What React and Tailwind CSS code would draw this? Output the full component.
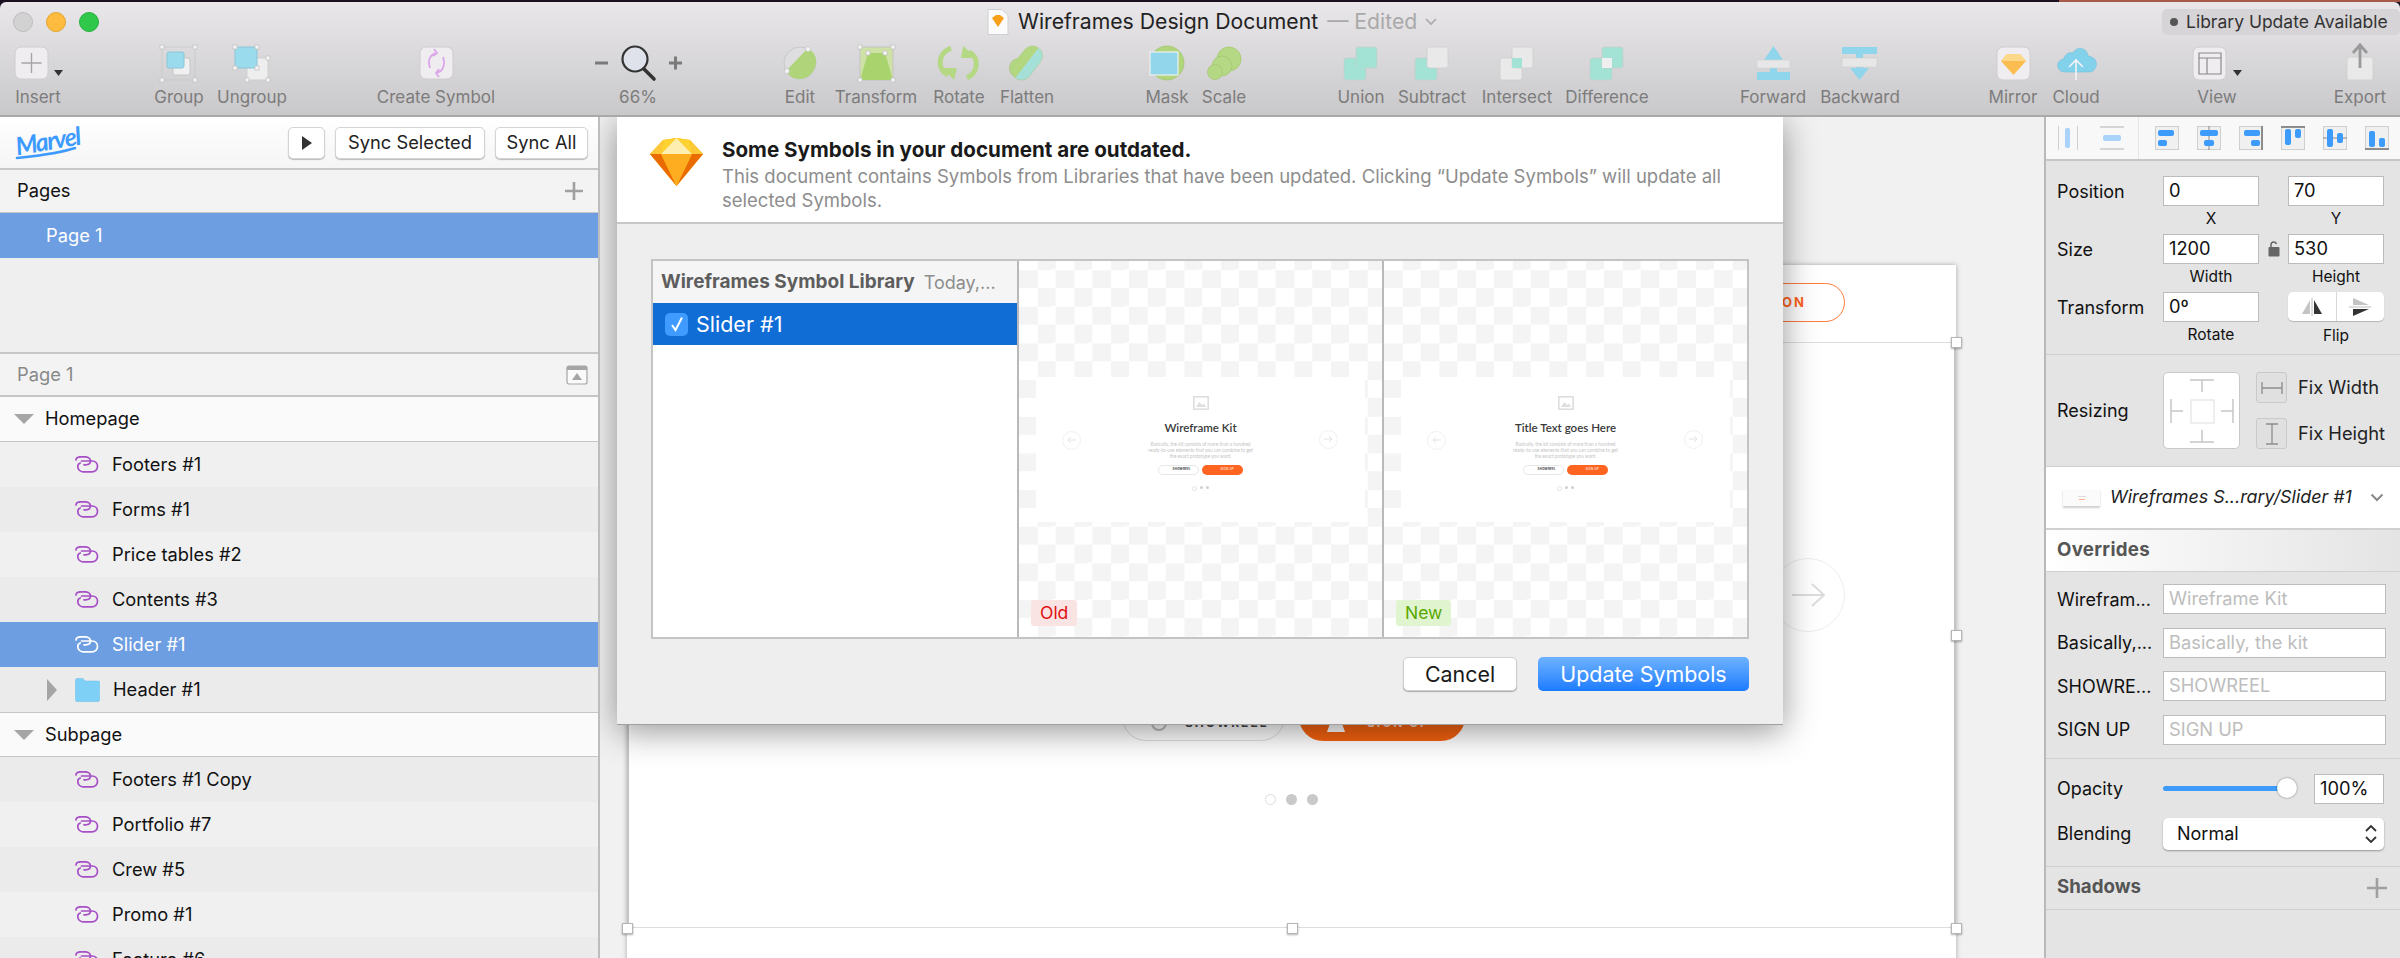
import React from "react";

const H = ({ x, y }) => <rect x={x - 2} y={y - 2} width="4" height="4" fill="#f5f5f5" stroke="#c4c4c4" strokeWidth="0.8" />;

const Diamond = ({ className }) => (
  <svg viewBox="0 0 53 48" className={className}>
    <polygon points="13,2 26.5,0 40,2 53,16 26.5,48 0,16" fill="#fdb300" />
    <polygon points="0,16 11,16 26.5,48" fill="#ea6c00" />
    <polygon points="53,16 42,16 26.5,48" fill="#ea6c00" />
    <polygon points="11,16 42,16 26.5,48" fill="#fdad1f" />
    <polygon points="13,2 11,16 26.5,0" fill="#fdd231" />
    <polygon points="40,2 42,16 26.5,0" fill="#fdd231" />
    <polygon points="26.5,0 11,16 42,16" fill="#feeeb0" />
    <polygon points="13,2 0,16 11,16" fill="#fdc83a" />
    <polygon points="40,2 53,16 42,16" fill="#fdc83a" />
  </svg>
);

const Box = ({ x = -16, w = 33 }) => <rect x={x} y="3" width={w} height="32" rx="6" fill="#efedef" stroke="#cfcdcf" />;

const TEAL = "#a3e3d5";
const A = (f) => <rect x="-17" y="14" width="22" height="22" rx="2.5" fill={f} stroke="#c9c9c9" strokeWidth="0.6" />;
const B = (f) => <rect x="-5" y="3" width="21" height="21" rx="2.5" fill={f} stroke="#c9c9c9" strokeWidth="0.6" />;
const O = (f) => <rect x="-5" y="14" width="10" height="10" fill={f} />;

const icons = {
  insert: (
    <>
      <rect x="-23" y="3" width="33" height="32" rx="6" fill="#efedef" stroke="#cfcdcf" />
      <path d="M-6.5 9v20M-16.5 19h20" stroke="#a5a5a5" strokeWidth="1.4" />
      <polygon points="16,26 25,26 20.5,32" fill="#333" />
    </>
  ),
  group: (
    <>
      <rect x="-17" y="3" width="33" height="33" fill="none" stroke="#cbcbcb" />
      <H x={-17} y={3} /><H x={16} y={3} /><H x={-17} y={36} /><H x={16} y={36} />
      <rect x="-6" y="14" width="17" height="17" rx="2" fill="#f0f0f0" stroke="#c8c8c8" />
      <rect x="-12" y="8" width="17" height="16" rx="2" fill="#9adcee" stroke="#8cc6d6" />
    </>
  ),
  ungroup: (
    <>
      <rect x="-5" y="14" width="21" height="22" fill="#eeeeee" stroke="#cfcfcf" />
      <H x={16} y={14} /><H x={16} y={36} /><H x={-5} y={36} />
      <rect x="-17" y="3" width="22" height="21" rx="1" fill="#9adcee" stroke="#8cc6d6" />
      <H x={-17} y={3} /><H x={5} y={3} /><H x={-17} y={24} /><H x={5} y={24} />
    </>
  ),
  symbol: (
    <>
      <Box />
      <path d="M-6 24 C-9 15 -5 10 1 9M-3 12 L1 9 L-2 5M7 13 C10 22 6 28 0 29M3 25 L0 29 L3 33" fill="none" stroke="#dca6ea" strokeWidth="1.8" />
    </>
  ),
  zoom: (
    <>
      <path d="M-43 19h13M31 19h13M37.5 12.5v13" stroke="#7a7a7a" strokeWidth="3" />
      <circle cx="-3" cy="15" r="12.5" fill="#dfe2ea" stroke="#333" strokeWidth="2.2" />
      <path d="M6 25 L16 35" stroke="#333" strokeWidth="3.6" strokeLinecap="round" />
    </>
  ),
  edit: (
    <>
      <circle cx="0" cy="19" r="16" fill="#dedddf" stroke="#c9c9c9" />
      <path d="M-14 27 L7 5 C14 6 17 14 16 20 C14 30 6 36 -1 35 C-7 35 -11 32 -14 27Z" fill="#afd47a" />
      <circle cx="-13" cy="27" r="2.5" fill="#f4f4f4" stroke="#bbb" strokeWidth="0.6" />
      <circle cx="8" cy="5" r="2.5" fill="#f4f4f4" stroke="#bbb" strokeWidth="0.6" />
    </>
  ),
  transform: (
    <>
      <rect x="-16" y="3" width="33" height="33" fill="#cfe2a6" stroke="#c4c4c4" />
      <polygon points="-8,9 9,9 17,36 -16,36" fill="#a8d36d" />
      <H x={-16} y={3} /><H x={17} y={3} /><H x={-16} y={36} /><H x={17} y={36} /><H x={-8} y={9} /><H x={9} y={9} />
    </>
  ),
  rotate: (
    <>
      <path d="M-8 4 C-22 10 -22 25 -11 31" fill="none" stroke="#b5d884" strokeWidth="5" />
      <polygon points="-17,24 -2,24 -5,36" fill="#b5d884" />
      <path d="M8 34 C20 28 20 13 10 8" fill="none" stroke="#b5d884" strokeWidth="5" />
      <polygon points="18,14 2,14 4,2" fill="#b5d884" />
    </>
  ),
  flatten: (
    <>
      <circle cx="-8" cy="24" r="9.5" fill="#b6d987" stroke="#9cc06a" strokeWidth="0.7" />
      <g transform="rotate(38 0 19)">
        <path d="M0 0 A10 10 0 0 0 -10 10 V28 A10 10 0 0 0 0 38Z" fill="#b2d77e" />
        <path d="M0 0 A10 10 0 0 1 10 10 V28 A10 10 0 0 1 0 38Z" fill="#a5e0d8" />
        <rect x="-10" y="0" width="20" height="38" rx="10" fill="none" stroke="#a8c98a" strokeWidth="0.5" />
      </g>
    </>
  ),
  mask: (
    <>
      <circle cx="0" cy="19" r="17" fill="#b0d57a" stroke="#9cc068" strokeWidth="0.6" />
      <rect x="-17" y="8" width="28" height="23" fill="#92d6ec" stroke="#f0f0f0" strokeWidth="1.2" />
    </>
  ),
  scale: (
    <>
      <circle cx="5" cy="15" r="12" fill="#b5d884" stroke="#9fc56c" strokeWidth="0.7" />
      <circle cx="-2" cy="22" r="10" fill="#b5d884" stroke="#9fc56c" strokeWidth="0.7" />
      <circle cx="-9" cy="28" r="7.5" fill="#b5d884" stroke="#9fc56c" strokeWidth="0.7" />
    </>
  ),
  union: (<>{A(TEAL)}{B(TEAL)}<rect x="-4" y="13" width="9" height="11" fill={TEAL} /></>),
  subtract: (<>{A(TEAL)}{B("#e9e9e9")}</>),
  intersect: (<>{A("#e9e9e9")}{B("#e9e9e9")}{O(TEAL)}</>),
  difference: (<>{A(TEAL)}{B(TEAL)}{O("#efefef")}</>),
  forward: (
    <>
      <polygon points="0.5,2 10,16 4,16 4,28 -3,28 -3,16 -9,16" fill="#8fd6ec" />
      <rect x="-16" y="16" width="33" height="8" fill="#e7e7e7" stroke="#cfcfcf" strokeWidth="0.6" />
      <rect x="-16" y="28" width="33" height="8" fill="#8fd6ec" />
    </>
  ),
  backward: (
    <>
      <rect x="-18" y="3" width="35" height="7" fill="#8fd6ec" />
      <polygon points="-0.5,36 9,24 3,24 3,10 -4,10 -4,24 -10,24" fill="#8fd6ec" />
      <rect x="-18" y="14" width="35" height="9" rx="1" fill="#e7e7e7" stroke="#cfcfcf" strokeWidth="0.6" />
    </>
  ),
  mirror: (
    <>
      <rect x="-16" y="3" width="33" height="33" rx="6" fill="#efedef" stroke="#cfcdcf" />
      <polygon points="-6,10 7,10 13,17 0.5,31 -12,17" fill="#fbbd50" />
      <polygon points="-6,10 7,10 13,17 -12,17" fill="#fcd98a" />
    </>
  ),
  cloud: (
    <>
      <path d="M-11 28 C-20 28 -21 16 -12 15 C-11 9 -6 8 -3 9 C0 2 11 3 12 12 C20 13 23 20 18 26 C16 28 14 28 12 28Z" fill="#82d2ec" stroke="#6fbfdb" strokeWidth="0.6" />
      <path d="M0 36V16M-7 23L0 16L7 23" fill="none" stroke="#f4f4f4" strokeWidth="1.6" />
    </>
  ),
  view: (
    <>
      <rect x="-24" y="3" width="33" height="33" rx="6" fill="#efedef" stroke="#cfcdcf" />
      <path d="M-18 9h22v21h-22zM-18 14h22M-10 14v16" fill="none" stroke="#8a8a8a" strokeWidth="1.2" />
      <polygon points="16,26 25,26 20.5,32" fill="#333" />
    </>
  ),
  export: (
    <>
      <rect x="-13" y="13" width="26" height="23" rx="2" fill="#e9e9e9" stroke="#d2d2d2" />
      <path d="M0 24V1M-7 9L0 1L7 9" fill="none" stroke="#9a9a9a" strokeWidth="2.8" />
    </>
  ),
};

const Tool = ({ icon, label, className }) => (
  <div className={`flex flex-col items-center shrink-0 ${className}`}>
    <svg width="100" height="40" viewBox="-50 0 100 40" className="shrink-0 overflow-visible">{icons[icon]}</svg>
    <span className="mt-[2px] h-[22px] leading-[22px] text-[17px] text-[#7c7c7c] whitespace-nowrap">{label}</span>
  </div>
);

const Toolbar = () => (
  <div className="shrink-0 bg-[#1b1020]">
    <div className="h-[2px] flex">
      <div className="flex-1 bg-[#1b1020]" />
      <div className="w-[341px] bg-[#a85a4a]" />
    </div>
    <div className="h-[115px] flex flex-col border-b-2 border-[#a9a9a9] rounded-t-[6px] bg-gradient-to-b from-[#e9e7ea] to-[#c9c8ca]">
      <div className="h-[40px] shrink-0 flex items-center relative">
        <div className="flex gap-[13px] ml-[13px]">
          <span className="w-[20px] h-[20px] rounded-full bg-[#d2d2d2] border border-[#bdbdbd]" />
          <span className="w-[20px] h-[20px] rounded-full bg-[#fdbc40] border border-[#e5a52f]" />
          <span className="w-[20px] h-[20px] rounded-full bg-[#2fc84a] border border-[#27b03f]" />
        </div>
        <div className="flex items-center ml-[888px]">
          <svg width="22" height="26" viewBox="0 0 22 26" className="mr-[9px]">
            <path d="M1 0.5h14l6 6v19H1z" fill="#fbfbfb" stroke="#cfcfcf" />
            <polygon points="5,9 9,6 13,6 17,9 11,18" fill="#f7a11a" />
          </svg>
          <span className="text-[21.2px] text-[#222] whitespace-nowrap">Wireframes Design Document</span>
          <span className="text-[21.2px] text-[#a9a9a9] ml-[9px] whitespace-nowrap">— Edited</span>
          <svg width="14" height="10" viewBox="0 0 14 10" className="ml-[7px]"><path d="M2 2l5 5 5-5" fill="none" stroke="#a9a9a9" strokeWidth="1.6" /></svg>
        </div>
        <div className="ml-auto h-[26px] w-[238px] rounded-[5px] bg-[#d6d4d7] flex items-center pl-[8px] gap-[8px]">
          <span className="w-[8px] h-[8px] rounded-full bg-[#555]" />
          <span className="text-[17.5px] text-[#333] whitespace-nowrap">Library Update Available</span>
        </div>
      </div>
      <div className="flex items-start mt-[2px]">
        <Tool icon="insert" label="Insert" className="w-[76px]" />
        <Tool icon="group" label="Group" className="w-[50px] ml-[78px]" />
        <Tool icon="ungroup" label="Ungroup" className="w-[70px] ml-[13px]" />
        <Tool icon="symbol" label="Create Symbol" className="w-[120px] ml-[89px]" />
        <Tool icon="zoom" label="66%" className="w-[100px] ml-[92px]" />
        <Tool icon="edit" label="Edit" className="w-[40px] ml-[92px]" />
        <Tool icon="transform" label="Transform" className="w-[80px] ml-[16px]" />
        <Tool icon="rotate" label="Rotate" className="w-[52px] ml-[17px]" />
        <Tool icon="flatten" label="Flatten" className="w-[56px] ml-[14px]" />
        <Tool icon="mask" label="Mask" className="w-[44px] ml-[90px]" />
        <Tool icon="scale" label="Scale" className="w-[44px] ml-[13px]" />
        <Tool icon="union" label="Union" className="w-[46px] ml-[92px]" />
        <Tool icon="subtract" label="Subtract" className="w-[70px] ml-[13px]" />
        <Tool icon="intersect" label="Intersect" className="w-[70px] ml-[15px]" />
        <Tool icon="difference" label="Difference" className="w-[84px] ml-[13px]" />
        <Tool icon="forward" label="Forward" className="w-[66px] ml-[91px]" />
        <Tool icon="backward" label="Backward" className="w-[80px] ml-[14px]" />
        <Tool icon="mirror" label="Mirror" className="w-[48px] ml-[89px]" />
        <Tool icon="cloud" label="Cloud" className="w-[46px] ml-[16px]" />
        <Tool icon="view" label="View" className="w-[40px] ml-[98px]" />
        <Tool icon="export" label="Export" className="w-[54px] ml-[96px]" />
      </div>
    </div>
  </div>
);

const SymbolIcon = ({ color = "#a64fc7" }) => (
  <svg width="24" height="17" viewBox="0 0 24 17" className="shrink-0">
    <path d="M1 4 C1 1.500 3 0.800 6 0.800 H10 C13.500 0.800 15.500 2.800 15.500 5 C15.500 7.500 13.500 8.800 10.500 8.800 H9" fill="none" stroke={color} strokeWidth="1.7" strokeLinecap="round" />
    <path d="M6.500 5 H17 C20.500 5 22.500 7.500 22.500 10.500 C22.500 13.500 20 15.800 17 15.800 H8 C5 15.800 2.800 13.500 2.800 10.500 C2.800 8.800 3.800 7.500 5.200 7" fill="none" stroke={color} strokeWidth="1.7" strokeLinecap="round" />
  </svg>
);

const Tri = () => <span className="w-0 h-0 border-x-[10px] border-x-transparent border-t-[10px] border-t-[#a5a5a5] shrink-0" />;

const GroupRow = ({ label, h }) => (
  <div className={`${h} shrink-0 bg-[#fafafa] border-b border-[#c6c6c6] flex items-center pl-[14px] gap-[11px] text-[18.3px] text-[#111]`}>
    <Tri />
    <span>{label}</span>
  </div>
);

const LayerRow = ({ label, bg, selected, folder }) => (
  <div className={`h-[45px] shrink-0 flex items-center relative pl-[75px] gap-[13px] text-[18.3px] ${selected ? "bg-[#6d9ee2] text-white" : `${bg} text-[#111]`}`}>
    {folder ? (
      <>
        <span className="absolute left-[47px] w-0 h-0 border-y-[11px] border-y-transparent border-l-[10px] border-l-[#a5a5a5]" />
        <svg width="25" height="24" viewBox="0 0 25 24" className="shrink-0">
          <path d="M0.500 3 C0.500 1 1 0.500 3 0.500 H8 L10 3 H24 C24.500 3 24.500 3.500 24.500 4 V22 C24.500 23 24 23.500 23 23.500 H2 C1 23.500 0.500 23 0.500 22Z" fill="#7fd0f7" stroke="#6bbde6" strokeWidth="0.5" />
        </svg>
      </>
    ) : (
      <SymbolIcon color={selected ? "#ffffff" : "#a64fc7"} />
    )}
    <span>{label}</span>
  </div>
);

const Sidebar = () => (
  <div className="w-[600px] shrink-0 flex flex-col border-r-2 border-[#bdbdbd] bg-[#efefef] overflow-hidden">
    <div className="h-[53px] shrink-0 bg-gradient-to-b from-white to-[#f5f5f5] border-b-2 border-[#c8c8c8] flex items-center relative">
      <div className="relative ml-[15px] w-[66px] h-[34px]">
        <span className="block text-[25px] leading-[28px] font-bold italic text-[#3d9bff] -rotate-[10deg] font-['Lato',sans-serif] tracking-[-1.5px]">Marvel</span>
        <svg width="64" height="14" viewBox="0 0 64 14" className="absolute left-0 top-[21px]"><path d="M2 11 C20 9 42 7 60 1" fill="none" stroke="#3d9bff" strokeWidth="2.6" strokeLinecap="round" /></svg>
      </div>
      <div className="ml-auto mr-[10px] flex gap-[10px] text-[18.3px] text-[#222]">
        <div className="w-[37px] h-[32px] bg-white rounded-[5px] border border-[#d4d4d4] shadow-[0_1px_1px_#bbb] flex items-center justify-center">
          <span className="w-0 h-0 border-y-[7px] border-y-transparent border-l-[10px] border-l-[#333]" />
        </div>
        <div className="w-[150px] h-[32px] bg-white rounded-[5px] border border-[#d4d4d4] shadow-[0_1px_1px_#bbb] flex items-center justify-center whitespace-nowrap">Sync Selected</div>
        <div className="w-[93px] h-[32px] bg-white rounded-[5px] border border-[#d4d4d4] shadow-[0_1px_1px_#bbb] flex items-center justify-center whitespace-nowrap">Sync All</div>
      </div>
    </div>
    <div className="h-[43px] shrink-0 bg-[#f3f3f3] border-b border-[#c6c6c6] flex items-center pl-[17px] pr-[14px] justify-between text-[18.3px] text-[#111]">
      <span>Pages</span>
      <svg width="20" height="20" viewBox="0 0 20 20"><path d="M10 1v18M1 10h18" stroke="#a0a0a0" strokeWidth="2.6" /></svg>
    </div>
    <div className="h-[45px] shrink-0 bg-[#6d9ee2] flex items-center pl-[46px] text-[18.3px] text-white">Page 1</div>
    <div className="h-[94px] shrink-0" />
    <div className="h-[45px] shrink-0 bg-[#f3f3f3] border-y-2 border-[#c6c6c6] flex items-center pl-[17px] pr-[10px] justify-between text-[18.3px] text-[#888]">
      <span>Page 1</span>
      <svg width="22" height="20" viewBox="0 0 22 20"><rect x="1" y="1" width="20" height="18" rx="2" fill="#fafafa" stroke="#a5a5a5" strokeWidth="1.2" /><rect x="1" y="1" width="20" height="4" fill="#a5a5a5" /><polygon points="11,8 16,15 6,15" fill="#a5a5a5" /></svg>
    </div>
    <GroupRow label="Homepage" h="h-[45px]" />
    <LayerRow label="Footers #1" bg="bg-[#f0f0f0]" />
    <LayerRow label="Forms #1" bg="bg-[#ebebeb]" />
    <LayerRow label="Price tables #2" bg="bg-[#f0f0f0]" />
    <LayerRow label="Contents #3" bg="bg-[#ebebeb]" />
    <LayerRow label="Slider #1" selected />
    <LayerRow label="Header #1" bg="bg-[#ebebeb]" folder />
    <GroupRow label="Subpage" h="h-[45px] border-t border-t-[#c6c6c6]" />
    <LayerRow label="Footers #1 Copy" bg="bg-[#ebebeb]" />
    <LayerRow label="Portfolio #7" bg="bg-[#f0f0f0]" />
    <LayerRow label="Crew #5" bg="bg-[#ebebeb]" />
    <LayerRow label="Promo #1" bg="bg-[#f0f0f0]" />
    <LayerRow label="Feature #6" bg="bg-[#ebebeb]" />
  </div>
);

const Handle = ({ className }) => (
  <span className={`absolute w-[11px] h-[11px] bg-white border border-[#b5b5b5] shadow-[0_1px_2px_rgba(0,0,0,0.3)] ${className}`} />
);

const MiniArrow = ({ flip, className }) => (
  <div className={`absolute w-[19px] h-[19px] rounded-full border border-[#f1f1f1] flex items-center justify-center ${className}`}>
    <svg width="9" height="8" viewBox="0 0 9 8" className={flip ? "rotate-180" : ""}><path d="M0 4h8M5 1l3 3-3 3" fill="none" stroke="#dcdcdc" strokeWidth="0.8" /></svg>
  </div>
);

const Pane = ({ title, tag, tagClass, border }) => (
  <div className={`relative flex-1 flex items-center justify-center bg-[conic-gradient(#f4f4f4_25%,#ffffff_0_50%,#f4f4f4_0_75%,#ffffff_0)] bg-[size:36.67px_36.67px] bg-[position:0px_27px] ${border}`}>
    <div className="relative w-[329px] h-[145px] bg-white flex flex-col items-center pt-[19px]">
      <svg width="16" height="14" viewBox="0 0 16 14" className="shrink-0">
        <rect x="0.800" y="0.800" width="14.400" height="12.400" fill="#fff" stroke="#dedede" strokeWidth="1.600" />
        <path d="M3 11l3.500-5 2.500 3 2-1.500 2 3.500z" fill="#dedede" />
      </svg>
      <div className="mt-[9px] h-[18px] leading-[18px] text-[11.5px] font-semibold text-[#3a3a3a] font-['Lato',sans-serif] whitespace-nowrap">{title}</div>
      <div className="mt-[4px] w-[110px] text-center text-[4.7px] leading-[6px] text-[#c4c4c4] font-['Lato',sans-serif]">Basically, the kit consists of more than a hundred ready-to-use elements that you can combine to get the exact prototype you want.</div>
      <div className="mt-[6px] flex gap-[3px]">
        <div className="w-[41px] h-[10px] rounded-full border border-[#e8e8e8] flex items-center justify-end pr-[7px] text-[3px] font-bold text-[#444] tracking-[0.2px]">SHOWREEL</div>
        <div className="w-[41px] h-[10px] rounded-full bg-[#ff6420] flex items-center justify-end pr-[9px] text-[3px] font-bold text-[#ffd7c4] tracking-[0.2px]">SIGN UP</div>
      </div>
      <div className="mt-[11px] flex gap-[3px]">
        <span className="w-[3px] h-[3px] rounded-full border border-[#e4e4e4] box-content" />
        <span className="w-[3px] h-[3px] rounded-full bg-[#cfcfcf]" />
        <span className="w-[3px] h-[3px] rounded-full bg-[#cfcfcf]" />
      </div>
      <MiniArrow flip className="left-[26px] top-[54px]" />
      <MiniArrow className="right-[27px] top-[53px]" />
    </div>
    <div className={`absolute left-[12px] bottom-[11px] h-[26px] rounded-[3px] px-[9px] flex items-center text-[17.5px] ${tagClass}`}>{tag}</div>
  </div>
);

const Dialog = () => (
  <div className="absolute left-[17px] top-0 w-[1166px] h-[608px] bg-[#eeeeee] shadow-[0_6px_32px_rgba(0,0,0,0.42)] flex flex-col border-b border-b-[#a0a0a0]">
    <div className="h-[107px] shrink-0 bg-white border-b-2 border-[#c8c8c8] flex pl-[33px]">
      <Diamond className="w-[53px] h-[48px] mt-[21px] shrink-0" />
      <div className="ml-[19px] pt-[20px]">
        <div className="text-[20.6px] leading-[26px] font-bold text-[#1a1a1a] whitespace-nowrap">Some Symbols in your document are outdated.</div>
        <div className="w-[1030px] mt-[1px] text-[18.5px] leading-[24px] text-[#8d8d8d]">This document contains Symbols from Libraries that have been updated. Clicking “Update Symbols” will update all selected Symbols.</div>
      </div>
    </div>
    <div className="mx-[34px] mt-[35px] h-[380px] flex border-2 border-[#c4c4c4] bg-white shrink-0">
      <div className="w-[364px] shrink-0 flex flex-col bg-white">
        <div className="h-[42px] shrink-0 bg-[#f5f5f5] flex items-center pl-[8px] gap-[9px] whitespace-nowrap">
          <span className="text-[19px] font-bold text-[#5d5d5d]">Wireframes Symbol Library</span>
          <span className="text-[18px] text-[#8d8d8d]">Today,...</span>
        </div>
        <div className="h-[42px] shrink-0 bg-[#106dd6] flex items-center pl-[12px] gap-[8px] text-[21.5px] text-white">
          <span className="w-[23px] h-[23px] rounded-[5px] bg-[#3f9bff] flex items-center justify-center">
            <svg width="14" height="16" viewBox="0 0 14 16"><path d="M2 9l3.500 5L12 1.500" fill="none" stroke="#fff" strokeWidth="2" /></svg>
          </span>
          <span>Slider #1</span>
        </div>
      </div>
      <Pane title="Wireframe Kit" tag="Old" tagClass="bg-[#f9e3e3] text-[#e01010]" border="border-l-2 border-[#b9b9b9]" />
      <Pane title="Title Text goes Here" tag="New" tagClass="bg-[#e0f5cf] text-[#5aa800]" border="border-l-2 border-[#b9b9b9]" />
    </div>
    <div className="mt-[18px] mr-[34px] flex justify-end gap-[21px]">
      <div className="w-[114px] h-[34px] rounded-[5px] bg-white border border-[#cfcfcf] shadow-[0_1px_1px_#aaa] flex items-center justify-center text-[21.4px] text-[#1a1a1a]">Cancel</div>
      <div className="w-[211px] h-[34px] rounded-[5px] bg-gradient-to-b from-[#6cb2ff] to-[#1a7bff] flex items-center justify-center text-[21.4px] text-white">Update Symbols</div>
    </div>
  </div>
);

const Canvas = () => (
  <div className="relative flex-1 bg-[#f1f1f1] overflow-hidden">
    <div className="absolute left-[27px] top-[148px] w-[1329px] h-[700px] bg-white shadow-[0_0_5px_rgba(0,0,0,0.3)]">
      <div className="absolute left-0 right-0 top-[77px] h-[586px] border-x-2 border-[#c4c4c4] border-y border-y-[#dedede]" />
      <div className="absolute right-[111px] top-[18px] w-[200px] h-[39px] rounded-full border border-[#ff7a3c] flex items-center justify-end pr-[38px] text-[13px] font-bold tracking-[2px] text-[#ff6420]">OPTION</div>
      <div className="absolute left-[1144px] top-[293px] w-[74px] h-[74px] rounded-full border border-[#eeeeee] flex items-center justify-center">
        <svg width="34" height="26" viewBox="0 0 34 26"><path d="M1 13h32M21 2l12 11-12 11" fill="none" stroke="#dddddd" strokeWidth="2" /></svg>
      </div>
      <div className="absolute left-[495px] top-[425px] w-[163px] h-[51px] rounded-[24px] border border-[#dddddd] flex items-center pt-[15px] pl-[28px] gap-[18px] text-[12px] font-bold tracking-[2px] text-[#444]">
        <span className="w-[16px] h-[16px] rounded-full border-2 border-[#bdbdbd]" />SHOWREEL
      </div>
      <div className="absolute left-[672px] top-[425px] w-[166px] h-[51px] rounded-[24px] bg-[#f5620f] flex items-center pt-[15px] pl-[28px] gap-[22px] text-[12px] font-bold tracking-[2px] text-[#ffd7c4]">
        <span className="w-[18px] h-[18px] bg-white [clip-path:polygon(35%_0,65%_0,100%_100%,0_100%)]" />SIGN UP
      </div>
      <div className="absolute left-[638px] top-[529px] flex gap-[10px]">
        <span className="w-[11px] h-[11px] rounded-full border border-[#dddddd]" />
        <span className="w-[11px] h-[11px] rounded-full bg-[#c9c9c9]" />
        <span className="w-[11px] h-[11px] rounded-full bg-[#c9c9c9]" />
      </div>
      <Handle className="left-[1324px] top-[72px]" />
      <Handle className="left-[1324px] top-[365px]" />
      <Handle className="left-[-5px] top-[658px]" />
      <Handle className="left-[660px] top-[658px]" />
      <Handle className="left-[1324px] top-[658px]" />
    </div>
    <Dialog />
  </div>
);

const AlignIcon = ({ edge, bars }) => (
  <svg width="24" height="24" viewBox="0 0 24 24">
    <rect x="0.500" y="0.500" width="23" height="23" fill="#f0f0f0" stroke="#cfcfcf" />
    {edge}
    {bars.map((b, i) => <rect key={i} x={b[0]} y={b[1]} width={b[2]} height={b[3]} rx="2" fill="#3d9bfb" />)}
  </svg>
);

const Inp = ({ children, className = "w-[96px]", muted }) => (
  <div className={`h-[30px] bg-white border border-[#bcbcbc] flex items-center pl-[5px] text-[18.3px] ${muted ? "text-[#bdbdbd]" : "text-[#111]"} ${className}`}>{children}</div>
);

const Field = ({ value, sub }) => (
  <div className="w-[96px] flex flex-col items-center">
    <Inp>{value}</Inp>
    <span className="h-[28px] leading-[26px] text-[15.5px] text-[#111]">{sub}</span>
  </div>
);

const PropRow = ({ label, children }) => (
  <div className="flex">
    <span className="w-[106px] h-[30px] leading-[31px] text-[18px] text-[#111] shrink-0">{label}</span>
    {children}
  </div>
);

const Override = ({ label, value }) => (
  <div className="flex items-center h-[30px]">
    <span className="w-[106px] text-[18px] text-[#111] shrink-0 whitespace-nowrap">{label}</span>
    <Inp className="w-[223px]" muted>{value}</Inp>
  </div>
);

const RightPanel = () => (
  <div className="w-[356px] shrink-0 flex flex-col border-l-2 border-[#b9b9b9] bg-[#e4e4e4] overflow-hidden">
    <div className="h-[44px] shrink-0 bg-[#f8f8f8] border-b-2 border-[#c6c6c6] flex items-center">
      <div className="w-[93px] h-full flex items-center pl-[12px] gap-[22px] border-r border-[#e4e4e4]">
        <svg width="20" height="24" viewBox="0 0 20 24"><path d="M0.500 0v24M19.500 0v24" stroke="#d0d0d0" /><rect x="7" y="2" width="5" height="20" rx="2" fill="#a9d3fb" /></svg>
        <svg width="24" height="24" viewBox="0 0 24 24"><path d="M0 1h24M0 23h24" stroke="#c9c9c9" strokeWidth="1.600" /><rect x="3" y="9" width="18" height="6" rx="2" fill="#a9d3fb" /></svg>
      </div>
      <div className="flex gap-[18px] pl-[16px]">
        <AlignIcon edge={<path d="M0 1h24" stroke="#777" strokeWidth="0" />} bars={[[3, 4, 16, 6], [3, 14, 9, 6]]} />
        <AlignIcon edge={<path d="M12 0v24" stroke="#888" />} bars={[[3, 4, 18, 6], [7, 14, 10, 6]]} />
        <AlignIcon edge={<path d="M23 0v24" stroke="#777" strokeWidth="1.600" />} bars={[[5, 4, 16, 6], [12, 14, 9, 6]]} />
        <AlignIcon edge={<path d="M0 1h24" stroke="#777" strokeWidth="1.600" />} bars={[[4, 3, 6, 16], [14, 3, 6, 9]]} />
        <AlignIcon edge={<path d="M0 12h24" stroke="#888" />} bars={[[4, 3, 6, 18], [14, 7, 6, 10]]} />
        <AlignIcon edge={<path d="M0 23h24" stroke="#777" strokeWidth="1.600" />} bars={[[4, 5, 6, 16], [14, 12, 6, 9]]} />
      </div>
    </div>
    <div className="shrink-0 pl-[11px] pt-[15px] pb-[4px] border-b border-[#d0d0d0]">
      <PropRow label="Position">
        <Field value="0" sub="X" /><div className="w-[29px]" /><Field value="70" sub="Y" />
      </PropRow>
      <PropRow label="Size">
        <Field value="1200" sub="Width" />
        <div className="w-[29px] h-[30px] flex items-center justify-center">
          <svg width="12" height="16" viewBox="0 0 12 16"><rect x="0.500" y="6" width="11" height="9.500" rx="1" fill="#666" /><path d="M3 6V3.500a2.800 2.800 0 0 1 5.500-.5" fill="none" stroke="#666" strokeWidth="1.500" /></svg>
        </div>
        <Field value="530" sub="Height" />
      </PropRow>
      <PropRow label="Transform">
        <Field value="0º" sub="Rotate" />
        <div className="w-[29px]" />
        <div className="w-[96px] flex flex-col items-center">
          <div className="w-[96px] h-[29px] rounded-[5px] bg-white shadow-[0_1px_1px_#b5b5b5] flex">
            <div className="flex-1 flex items-center justify-center border-r border-[#d8d8d8]">
              <svg width="24" height="18" viewBox="0 0 24 18"><polygon points="10,2 10,16 2,16" fill="#c4c4c4" /><path d="M12 0v18" stroke="#bbb" /><polygon points="14,2 14,16 22,16" fill="#333" /></svg>
            </div>
            <div className="flex-1 flex items-center justify-center">
              <svg width="22" height="20" viewBox="0 0 22 20"><polygon points="4,1 20,8 4,8" fill="#c4c4c4" /><path d="M0 10h22" stroke="#bbb" /><polygon points="4,19 20,12 4,12" fill="#333" /></svg>
            </div>
          </div>
          <span className="h-[29px] leading-[29px] text-[15.5px] text-[#111]">Flip</span>
        </div>
      </PropRow>
    </div>
    <div className="h-[112px] shrink-0 pl-[11px] pt-[17px] border-b border-[#d0d0d0] flex">
      <span className="w-[106px] h-[77px] flex items-center text-[18px] text-[#111] shrink-0">Resizing</span>
      <div className="w-[77px] h-[77px] bg-white rounded-[5px] border border-[#c9c9c9] shrink-0 flex items-center justify-center">
        <svg width="68" height="68" viewBox="0 0 68 68">
          <rect x="23" y="23" width="23" height="23" fill="#fff" stroke="#dedede" strokeWidth="1" />
          <path d="M22 3h24M34 3v12M22 65h24M34 53v12M3 22v24M3 34h12M65 22v24M53 34h12" stroke="#c6c6c6" strokeWidth="1.500" fill="none" />
        </svg>
      </div>
      <div className="ml-[16px] flex flex-col gap-[15px]">
        <div className="flex items-center h-[31px]">
          <div className="w-[31px] h-[31px] rounded-[3px] border border-[#c9c9c9] bg-[#e0e0e0] flex items-center justify-center">
            <svg width="22" height="12" viewBox="0 0 22 12"><path d="M1 0v12M21 0v12M1 6h20" stroke="#8d8d8d" strokeWidth="1.300" /></svg>
          </div>
          <span className="ml-[11px] text-[18.3px] text-[#222] whitespace-nowrap">Fix Width</span>
        </div>
        <div className="flex items-center h-[31px]">
          <div className="w-[31px] h-[31px] rounded-[3px] border border-[#c9c9c9] bg-[#e0e0e0] flex items-center justify-center">
            <svg width="12" height="22" viewBox="0 0 12 22"><path d="M0 1h12M0 21h12M6 1v20" stroke="#8d8d8d" strokeWidth="1.300" /></svg>
          </div>
          <span className="ml-[11px] text-[18.3px] text-[#222] whitespace-nowrap">Fix Height</span>
        </div>
      </div>
    </div>
    <div className="h-[63px] shrink-0 bg-white border-b-2 border-[#d0d0d0] flex items-center pl-[17px] pr-[16px]">
      <div className="w-[37px] h-[17px] bg-[#fbfbfb] shadow-[0_2px_2px_rgba(0,0,0,0.2)] shrink-0 flex flex-col items-center justify-center gap-[2px]">
        <span className="w-[8px] h-[1px] bg-[#dddddd]" />
        <span className="w-[6px] h-[1px] bg-[#ffb08a]" />
      </div>
      <span className="ml-[10px] text-[17.9px] italic text-[#222] whitespace-nowrap">Wireframes S...rary/Slider #1</span>
      <svg width="14" height="9" viewBox="0 0 14 9" className="ml-auto"><path d="M1.500 1.500L7 7l5.500-5.500" fill="none" stroke="#888" strokeWidth="2" /></svg>
    </div>
    <div className="h-[42px] shrink-0 bg-gradient-to-r from-white to-[#e4e4e4] border-b border-[#d0d0d0] flex items-center pl-[11px] text-[18.7px] tracking-[0.3px] font-bold text-[#555]">Overrides</div>
    <div className="shrink-0 pl-[11px] pt-[12px] pb-[13px] flex flex-col gap-[13.5px] border-b border-[#d0d0d0]">
      <Override label="Wirefram..." value="Wireframe Kit" />
      <Override label="Basically,..." value="Basically, the kit" />
      <Override label="SHOWRE..." value="SHOWREEL" />
      <Override label="SIGN UP" value="SIGN UP" />
    </div>
    <div className="shrink-0 pl-[11px] pt-[15px] pb-[16px] flex flex-col gap-[14px] border-b border-[#d0d0d0]">
      <div className="flex items-center h-[30px]">
        <span className="w-[106px] text-[18px] text-[#111] shrink-0">Opacity</span>
        <div className="relative w-[124px] h-[5px] rounded-full bg-[#3d9bfb]">
          <span className="absolute right-[-10px] top-[-8px] w-[20px] h-[20px] rounded-full bg-white shadow-[0_0_2px_rgba(0,0,0,0.5)]" />
        </div>
        <Inp className="w-[70px] ml-[27px]">100%</Inp>
      </div>
      <div className="flex items-center h-[32px]">
        <span className="w-[106px] text-[18px] text-[#111] shrink-0">Blending</span>
        <div className="w-[221px] h-[32px] rounded-[5px] bg-white shadow-[0_1px_2px_rgba(0,0,0,0.35)] flex items-center pl-[14px] pr-[6px] justify-between text-[18px] text-[#111]">
          <span>Normal</span>
          <svg width="14" height="22" viewBox="0 0 14 22"><path d="M2 8l5-5 5 5M2 14l5 5 5-5" fill="none" stroke="#333" strokeWidth="1.800" /></svg>
        </div>
      </div>
    </div>
    <div className="h-[43px] shrink-0 border-b border-[#d0d0d0] flex items-center pl-[11px] pr-[13px] justify-between text-[18.7px] font-bold text-[#555]">
      <span>Shadows</span>
      <svg width="20" height="20" viewBox="0 0 20 20"><path d="M10 0v20M0 10h20" stroke="#a0a0a0" strokeWidth="2.600" /></svg>
    </div>
  </div>
);

export default function App() {
  return (
    <div className="w-[2400px] h-[958px] overflow-hidden flex flex-col font-['Inter','Noto_Sans',sans-serif] bg-[#f1f1f1]">
      <Toolbar />
      <div className="flex-1 flex min-h-0">
        <Sidebar />
        <Canvas />
        <RightPanel />
      </div>
    </div>
  );
}
